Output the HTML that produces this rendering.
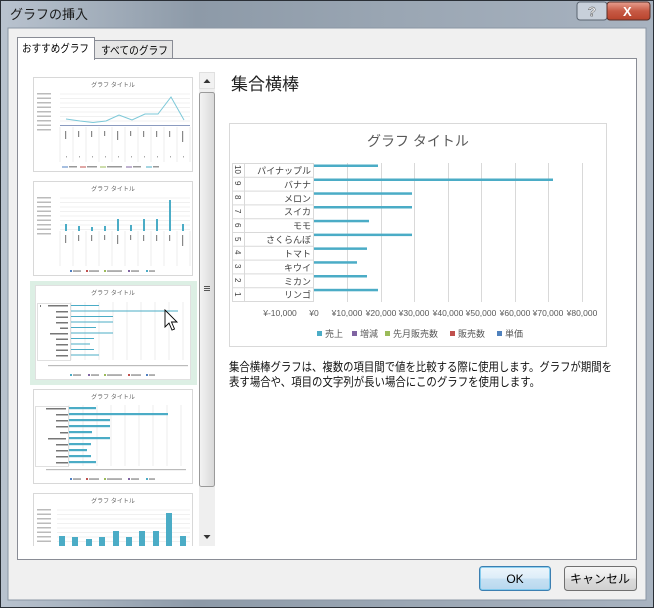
<!DOCTYPE html>
<html><head><meta charset="utf-8"><style>
body{margin:0;width:654px;height:608px;overflow:hidden;background:#6b7a8a}
svg{display:block}
text{font-family:"Liberation Sans","Noto Sans CJK JP",sans-serif}
</style></head><body>
<svg width="654" height="608" viewBox="0 0 654 608" xmlns="http://www.w3.org/2000/svg">
<defs>
<linearGradient id="tb" x1="0" x2="1"><stop offset="0" stop-color="#b9c3cf"/><stop offset=".3" stop-color="#8d9aa8"/><stop offset=".6" stop-color="#9aa6b3"/><stop offset="1" stop-color="#a8b3c0"/></linearGradient>
<linearGradient id="btn" x1="0" y1="0" x2="0" y2="1"><stop offset="0" stop-color="#f6f6f6"/><stop offset=".5" stop-color="#e8e8e8"/><stop offset=".5" stop-color="#dcdcdc"/><stop offset="1" stop-color="#d0d0d0"/></linearGradient>
<linearGradient id="ok" x1="0" y1="0" x2="0" y2="1"><stop offset="0" stop-color="#eef7fc"/><stop offset=".5" stop-color="#dcecf8"/><stop offset=".5" stop-color="#c7e1f3"/><stop offset="1" stop-color="#b7d7ee"/></linearGradient>
<linearGradient id="cl" x1="0" y1="0" x2="0" y2="1"><stop offset="0" stop-color="#e8a090"/><stop offset=".5" stop-color="#c75a45"/><stop offset="1" stop-color="#b8432c"/></linearGradient>
<linearGradient id="sb" x1="0" x2="1"><stop offset="0" stop-color="#f4f4f4"/><stop offset="1" stop-color="#d8d8d8"/></linearGradient>
</defs>
<rect x="0" y="0" width="654" height="608" fill="url(#tb)"/>
<rect x="0.5" y="0.5" width="653" height="607" fill="none" stroke="#2a2f36"/>
<text x="10" y="19" font-size="13" fill="#1a1a1a">グラフの挿入</text>
<rect x="577" y="2" width="30" height="18" rx="3" fill="#c8d0da" stroke="#5a6470"/>
<text x="588" y="16" font-size="13" font-weight="bold" fill="#fff" stroke="#333" stroke-width=".4" font-family="Liberation Sans">?</text>
<rect x="607" y="2" width="43" height="18" rx="3" fill="url(#cl)" stroke="#5a3028"/>
<text x="623" y="16" font-size="13" font-weight="bold" fill="#fff" font-family="Liberation Sans">X</text>
<rect x="8" y="28" width="638" height="572" fill="#f0f0f0" stroke="#8a96a4"/>
<rect x="17.5" y="58.5" width="619" height="501" fill="#fff" stroke="#898c95"/>
<rect x="94.5" y="40.5" width="78" height="18" fill="#e6e6e6" stroke="#898c95"/>
<text x="101" y="54" font-size="11" fill="#000" textLength="67" lengthAdjust="spacingAndGlyphs">すべてのグラフ</text>
<rect x="17.5" y="37.5" width="77" height="22" fill="#fff" stroke="#898c95"/>
<rect x="18" y="58" width="76" height="3" fill="#fff"/>
<text x="22" y="52" font-size="11" fill="#000" textLength="67" lengthAdjust="spacingAndGlyphs">おすすめグラフ</text>

<g font-size="5" fill="#666">
<rect x="33.5" y="77.5" width="159" height="94" fill="#fff" stroke="#d8d8d8"/>
<text x="113" y="87" font-size="6" text-anchor="middle">グラフ タイトル</text>
<g stroke="#e2e2e2" stroke-width=".6">
<line x1="60" y1="94" x2="190" y2="94"/><line x1="60" y1="98.5" x2="190" y2="98.5"/><line x1="60" y1="103" x2="190" y2="103"/><line x1="60" y1="107.5" x2="190" y2="107.5"/><line x1="60" y1="112" x2="190" y2="112"/><line x1="60" y1="116.5" x2="190" y2="116.5"/><line x1="60" y1="121" x2="190" y2="121"/><line x1="60" y1="125.5" x2="190" y2="125.5"/>
<line x1="60" y1="127" x2="60" y2="162"/><line x1="73" y1="127" x2="73" y2="162"/><line x1="86" y1="127" x2="86" y2="162"/><line x1="99" y1="127" x2="99" y2="162"/><line x1="112" y1="127" x2="112" y2="162"/><line x1="125" y1="127" x2="125" y2="162"/><line x1="138" y1="127" x2="138" y2="162"/><line x1="151" y1="127" x2="151" y2="162"/><line x1="164" y1="127" x2="164" y2="162"/><line x1="177" y1="127" x2="177" y2="162"/><line x1="190" y1="127" x2="190" y2="162"/>
</g>
<g fill="#bbb"><rect x="37" y="93" width="14" height="1.5"/><rect x="37" y="97.5" width="14" height="1.5"/><rect x="37" y="102" width="14" height="1.5"/><rect x="37" y="106.5" width="14" height="1.5"/><rect x="37" y="111" width="14" height="1.5"/><rect x="37" y="115.5" width="14" height="1.5"/><rect x="37" y="120" width="14" height="1.5"/><rect x="37" y="124.5" width="14" height="1.5"/><rect x="37" y="129" width="14" height="1.5"/></g>
<polyline points="66,119 80,121 93,122.5 106,121 119,115 132,120 145,114 158,114 171,97 184,120" fill="none" stroke="#7cc8d8" stroke-width="1"/>
<line x1="60" y1="125.5" x2="190" y2="125.5" stroke="#6a7fb0" stroke-width=".8"/>
<g fill="#888"><rect x="65" y="131" width="1.2" height="8"/><rect x="78" y="131" width="1.2" height="6"/><rect x="91" y="131" width="1.2" height="6"/><rect x="104" y="131" width="1.2" height="5"/><rect x="117" y="131" width="1.2" height="9"/><rect x="130" y="131" width="1.2" height="5"/><rect x="143" y="131" width="1.2" height="6"/><rect x="156" y="131" width="1.2" height="6"/><rect x="169" y="131" width="1.2" height="6"/><rect x="182" y="131" width="1.2" height="11"/></g>
<g fill="#aaa"><rect x="66" y="156" width="1" height="1.5"/><rect x="79" y="156" width="1" height="1.5"/><rect x="92" y="156" width="1" height="1.5"/><rect x="105" y="156" width="1" height="1.5"/><rect x="118" y="156" width="1" height="1.5"/><rect x="131" y="156" width="1" height="1.5"/><rect x="144" y="156" width="1" height="1.5"/><rect x="157" y="156" width="1" height="1.5"/><rect x="170" y="156" width="1" height="1.5"/><rect x="183" y="156" width="1" height="1.5"/></g>
<g stroke-width="1"><line x1="62" y1="167" x2="68" y2="167" stroke="#4f7fc0"/><line x1="80" y1="167" x2="86" y2="167" stroke="#c0504d"/><line x1="100" y1="167" x2="106" y2="167" stroke="#9bbb59"/><line x1="126" y1="167" x2="132" y2="167" stroke="#8064a2"/><line x1="146" y1="167" x2="152" y2="167" stroke="#4bacc6"/></g>
<g fill="#999"><rect x="69" y="166" width="8" height="1.5"/><rect x="87" y="166" width="10" height="1.5"/><rect x="107" y="166" width="15" height="1.5"/><rect x="133" y="166" width="8" height="1.5"/><rect x="153" y="166" width="6" height="1.5"/></g>
<rect x="33.5" y="181.5" width="159" height="94" fill="#fff" stroke="#d8d8d8"/>
<text x="113" y="191" font-size="6" text-anchor="middle">グラフ タイトル</text>
<g stroke="#e2e2e2" stroke-width=".6">
<line x1="60" y1="198" x2="190" y2="198"/><line x1="60" y1="202.5" x2="190" y2="202.5"/><line x1="60" y1="207" x2="190" y2="207"/><line x1="60" y1="211.5" x2="190" y2="211.5"/><line x1="60" y1="216" x2="190" y2="216"/><line x1="60" y1="220.5" x2="190" y2="220.5"/><line x1="60" y1="225" x2="190" y2="225"/><line x1="60" y1="229.5" x2="190" y2="229.5"/>
<line x1="60" y1="231" x2="60" y2="266"/><line x1="73" y1="231" x2="73" y2="266"/><line x1="86" y1="231" x2="86" y2="266"/><line x1="99" y1="231" x2="99" y2="266"/><line x1="112" y1="231" x2="112" y2="266"/><line x1="125" y1="231" x2="125" y2="266"/><line x1="138" y1="231" x2="138" y2="266"/><line x1="151" y1="231" x2="151" y2="266"/><line x1="164" y1="231" x2="164" y2="266"/><line x1="177" y1="231" x2="177" y2="266"/><line x1="190" y1="231" x2="190" y2="266"/>
</g>
<g fill="#bbb"><rect x="37" y="197" width="14" height="1.5"/><rect x="37" y="201.5" width="14" height="1.5"/><rect x="37" y="206" width="14" height="1.5"/><rect x="37" y="210.5" width="14" height="1.5"/><rect x="37" y="215" width="14" height="1.5"/><rect x="37" y="219.5" width="14" height="1.5"/><rect x="37" y="224" width="14" height="1.5"/><rect x="37" y="228.5" width="14" height="1.5"/><rect x="37" y="233" width="14" height="1.5"/></g>
<g fill="#4bacc6"><rect x="65" y="224" width="2" height="7"/><rect x="78" y="226" width="2" height="5"/><rect x="91" y="227" width="2" height="4"/><rect x="104" y="226" width="2" height="5"/><rect x="117" y="219" width="2" height="12"/><rect x="130" y="225" width="2" height="6"/><rect x="143" y="219" width="2" height="12"/><rect x="156" y="219" width="2" height="12"/><rect x="169" y="200" width="2" height="31"/><rect x="182" y="224" width="2" height="7"/></g>
<g fill="#888"><rect x="65" y="235" width="1.2" height="8"/><rect x="78" y="235" width="1.2" height="6"/><rect x="91" y="235" width="1.2" height="6"/><rect x="104" y="235" width="1.2" height="5"/><rect x="117" y="235" width="1.2" height="9"/><rect x="130" y="235" width="1.2" height="5"/><rect x="143" y="235" width="1.2" height="6"/><rect x="156" y="235" width="1.2" height="6"/><rect x="169" y="235" width="1.2" height="6"/><rect x="182" y="235" width="1.2" height="11"/></g>
<g><rect x="70" y="270" width="2" height="2" fill="#4f7fc0"/><rect x="86" y="270" width="2" height="2" fill="#c0504d"/><rect x="104" y="270" width="2" height="2" fill="#9bbb59"/><rect x="128" y="270" width="2" height="2" fill="#8064a2"/><rect x="146" y="270" width="2" height="2" fill="#4bacc6"/></g>
<g fill="#999"><rect x="73" y="270.3" width="8" height="1.5"/><rect x="89" y="270.3" width="10" height="1.5"/><rect x="107" y="270.3" width="15" height="1.5"/><rect x="131" y="270.3" width="8" height="1.5"/><rect x="149" y="270.3" width="6" height="1.5"/></g>
<rect x="30" y="281" width="167" height="104" fill="#dcefe4"/>
<rect x="35.5" y="285.5" width="155" height="94" fill="#fff" stroke="#e0e0e0"/>
<text x="113" y="295" font-size="6" text-anchor="middle">グラフ タイトル</text>
<g stroke="#e2e2e2" stroke-width=".6"><line x1="71" y1="302" x2="71" y2="360"/><line x1="85" y1="302" x2="85" y2="360"/><line x1="99" y1="302" x2="99" y2="360"/><line x1="113" y1="302" x2="113" y2="360"/><line x1="127" y1="302" x2="127" y2="360"/><line x1="141" y1="302" x2="141" y2="360"/><line x1="155" y1="302" x2="155" y2="360"/><line x1="169" y1="302" x2="169" y2="360"/><line x1="183" y1="302" x2="183" y2="360"/></g>
<rect x="37.5" y="303.5" width="33" height="57" fill="none" stroke="#ccc" stroke-width=".6"/>
<g fill="#777"><rect x="40" y="305" width="1" height="2"/><rect x="48" y="305" width="20" height="1.5"/><rect x="56" y="311" width="12" height="1.5"/><rect x="56" y="316.5" width="12" height="1.5"/><rect x="56" y="322" width="12" height="1.5"/><rect x="60" y="327.5" width="8" height="1.5"/><rect x="50" y="333" width="18" height="1.5"/><rect x="56" y="338.5" width="12" height="1.5"/><rect x="56" y="344" width="12" height="1.5"/><rect x="56" y="349.5" width="12" height="1.5"/><rect x="56" y="355" width="12" height="1.5"/></g>
<g fill="#4bacc6"><rect x="71" y="305" width="28" height="1"/><rect x="71" y="310.5" width="107" height="1"/><rect x="71" y="316" width="42" height="1"/><rect x="71" y="321.5" width="42" height="1"/><rect x="71" y="327" width="25" height="1"/><rect x="71" y="332.5" width="42" height="1"/><rect x="71" y="338" width="23" height="1"/><rect x="71" y="343.5" width="19" height="1"/><rect x="71" y="349" width="23" height="1"/><rect x="71" y="354.5" width="28" height="1"/></g>
<rect x="48" y="365" width="140" height="1.2" fill="#bbb"/>
<g><rect x="70" y="374" width="2" height="2" fill="#4bacc6"/><rect x="88" y="374" width="2" height="2" fill="#8064a2"/><rect x="104" y="374" width="2" height="2" fill="#9bbb59"/><rect x="128" y="374" width="2" height="2" fill="#c0504d"/><rect x="146" y="374" width="2" height="2" fill="#4f7fc0"/></g>
<g fill="#999"><rect x="73" y="374.3" width="8" height="1.5"/><rect x="91" y="374.3" width="8" height="1.5"/><rect x="107" y="374.3" width="15" height="1.5"/><rect x="131" y="374.3" width="10" height="1.5"/><rect x="149" y="374.3" width="6" height="1.5"/></g>
<path d="M165,310 L165,327 L169,323 L172,330 L174.5,329 L171.5,322 L177,322 Z" fill="#fff" stroke="#000" stroke-width=".9"/>
<rect x="33.5" y="389.5" width="159" height="94" fill="#fff" stroke="#d8d8d8"/>
<text x="113" y="399" font-size="6" text-anchor="middle">グラフ タイトル</text>
<g stroke="#e2e2e2" stroke-width=".6"><line x1="69" y1="405" x2="69" y2="466"/><line x1="83" y1="405" x2="83" y2="466"/><line x1="97" y1="405" x2="97" y2="466"/><line x1="111" y1="405" x2="111" y2="466"/><line x1="125" y1="405" x2="125" y2="466"/><line x1="139" y1="405" x2="139" y2="466"/><line x1="153" y1="405" x2="153" y2="466"/><line x1="167" y1="405" x2="167" y2="466"/><line x1="181" y1="405" x2="181" y2="466"/></g>
<rect x="35.5" y="406.5" width="33" height="60" fill="none" stroke="#ccc" stroke-width=".6"/>
<g fill="#777"><rect x="46" y="408" width="20" height="1.5"/><rect x="56" y="414" width="12" height="1.5"/><rect x="56" y="420" width="12" height="1.5"/><rect x="56" y="426" width="12" height="1.5"/><rect x="60" y="432" width="8" height="1.5"/><rect x="48" y="438" width="18" height="1.5"/><rect x="56" y="444" width="12" height="1.5"/><rect x="56" y="450" width="12" height="1.5"/><rect x="56" y="456" width="12" height="1.5"/><rect x="56" y="462" width="12" height="1.5"/></g>
<g fill="#4bacc6"><rect x="69" y="407" width="27" height="2.2"/><rect x="69" y="413" width="99" height="2.2"/><rect x="69" y="419" width="41" height="2.2"/><rect x="69" y="425" width="41" height="2.2"/><rect x="69" y="431" width="23" height="2.2"/><rect x="69" y="437" width="41" height="2.2"/><rect x="69" y="443" width="22" height="2.2"/><rect x="69" y="449" width="18" height="2.2"/><rect x="69" y="455" width="22" height="2.2"/><rect x="69" y="461" width="27" height="2.2"/></g>
<rect x="46" y="469" width="140" height="1.2" fill="#bbb"/>
<g><rect x="70" y="478" width="2" height="2" fill="#4f7fc0"/><rect x="86" y="478" width="2" height="2" fill="#c0504d"/><rect x="104" y="478" width="2" height="2" fill="#9bbb59"/><rect x="128" y="478" width="2" height="2" fill="#8064a2"/><rect x="146" y="478" width="2" height="2" fill="#4bacc6"/></g>
<g fill="#999"><rect x="73" y="478.3" width="8" height="1.5"/><rect x="89" y="478.3" width="10" height="1.5"/><rect x="107" y="478.3" width="15" height="1.5"/><rect x="131" y="478.3" width="8" height="1.5"/><rect x="149" y="478.3" width="6" height="1.5"/></g>
<rect x="33.5" y="493.5" width="159" height="60" fill="#fff" stroke="#d8d8d8"/>
<text x="113" y="503" font-size="6" text-anchor="middle">グラフ タイトル</text>
<g stroke="#e2e2e2" stroke-width=".6"><line x1="57" y1="510" x2="190" y2="510"/><line x1="57" y1="514.5" x2="190" y2="514.5"/><line x1="57" y1="519" x2="190" y2="519"/><line x1="57" y1="523.5" x2="190" y2="523.5"/><line x1="57" y1="528" x2="190" y2="528"/><line x1="57" y1="532.5" x2="190" y2="532.5"/><line x1="57" y1="537" x2="190" y2="537"/><line x1="57" y1="541.5" x2="190" y2="541.5"/></g>
<g fill="#bbb"><rect x="37" y="509" width="14" height="1.5"/><rect x="37" y="513.5" width="14" height="1.5"/><rect x="37" y="518" width="14" height="1.5"/><rect x="37" y="522.5" width="14" height="1.5"/><rect x="37" y="527" width="14" height="1.5"/><rect x="37" y="531.5" width="14" height="1.5"/><rect x="37" y="536" width="14" height="1.5"/><rect x="37" y="540.5" width="14" height="1.5"/></g>
<g fill="#4bacc6"><rect x="59" y="536" width="6" height="10"/><rect x="72" y="537" width="6" height="9"/><rect x="86" y="539" width="6" height="7"/><rect x="99" y="537" width="6" height="9"/><rect x="113" y="531" width="6" height="15"/><rect x="126" y="537" width="6" height="9"/><rect x="139" y="531" width="6" height="15"/><rect x="153" y="531" width="6" height="15"/><rect x="166" y="513" width="6" height="33"/><rect x="180" y="536" width="6" height="10"/></g>
</g>
<rect x="18" y="546" width="198" height="13" fill="#fff"/>

<rect x="199" y="72" width="16" height="474" fill="#efefef"/>
<rect x="199.5" y="72.5" width="15" height="16" fill="#f2f2f2" stroke="#e0e0e0"/>
<path d="M203.5,83 L207,79 L210.5,83 Z" fill="#333"/>
<rect x="199.5" y="92.5" width="15" height="394" rx="2" fill="url(#sb)" stroke="#9a9a9a"/>
<g stroke="#555" stroke-width="1"><line x1="204" y1="286.5" x2="210" y2="286.5"/><line x1="204" y1="288.5" x2="210" y2="288.5"/><line x1="204" y1="290.5" x2="210" y2="290.5"/></g>
<path d="M203.5,535 L210.5,535 L207,539 Z" fill="#333"/>

<text x="231" y="90" font-size="17" fill="#222">集合横棒</text>
<rect x="229.5" y="123.5" width="377" height="223" fill="#fff" stroke="#d9d9d9"/>
<text x="418" y="146" font-size="14" fill="#595959" text-anchor="middle">グラフ タイトル</text>
<g stroke="#d9d9d9" stroke-width="1">
<line x1="347.5" y1="163" x2="347.5" y2="302"/><line x1="381.5" y1="163" x2="381.5" y2="302"/><line x1="414.5" y1="163" x2="414.5" y2="302"/><line x1="448.5" y1="163" x2="448.5" y2="302"/><line x1="481.5" y1="163" x2="481.5" y2="302"/><line x1="515.5" y1="163" x2="515.5" y2="302"/><line x1="548.5" y1="163" x2="548.5" y2="302"/><line x1="582.5" y1="163" x2="582.5" y2="302"/>
</g>
<g stroke="#d9d9d9" fill="none">
<rect x="232.5" y="163.5" width="81" height="138"/>
<line x1="244.5" y1="163" x2="244.5" y2="302"/>
<line x1="232" y1="177.3" x2="314" y2="177.3"/><line x1="232" y1="191.1" x2="314" y2="191.1"/><line x1="232" y1="204.9" x2="314" y2="204.9"/><line x1="232" y1="218.7" x2="314" y2="218.7"/><line x1="232" y1="232.5" x2="314" y2="232.5"/><line x1="232" y1="246.3" x2="314" y2="246.3"/><line x1="232" y1="260.1" x2="314" y2="260.1"/><line x1="232" y1="273.9" x2="314" y2="273.9"/><line x1="232" y1="287.7" x2="314" y2="287.7"/>
</g>
<g font-size="9" fill="#404040" text-anchor="end">
<text x="311" y="174">パイナップル</text><text x="311" y="188">バナナ</text><text x="311" y="202">メロン</text><text x="311" y="215">スイカ</text><text x="311" y="229">モモ</text><text x="311" y="243">さくらんぼ</text><text x="311" y="257">トマト</text><text x="311" y="271">キウイ</text><text x="311" y="285">ミカン</text><text x="311" y="298">リンゴ</text>
</g>
<g font-size="8" fill="#404040">
<text transform="translate(235,165) rotate(90)">10</text><text transform="translate(235,181) rotate(90)">9</text><text transform="translate(235,195) rotate(90)">8</text><text transform="translate(235,209) rotate(90)">7</text><text transform="translate(235,223) rotate(90)">6</text><text transform="translate(235,237) rotate(90)">5</text><text transform="translate(235,250) rotate(90)">4</text><text transform="translate(235,264) rotate(90)">3</text><text transform="translate(235,278) rotate(90)">2</text><text transform="translate(235,292) rotate(90)">1</text>
</g>
<g fill="#4bacc6">
<rect x="314" y="164.5" width="64" height="2.5"/><rect x="314" y="178.5" width="239" height="2.5"/><rect x="314" y="192.3" width="98" height="2.5"/><rect x="314" y="206" width="98" height="2.5"/><rect x="314" y="219.8" width="55" height="2.5"/><rect x="314" y="233.6" width="98" height="2.5"/><rect x="314" y="247.4" width="53" height="2.5"/><rect x="314" y="261.2" width="43" height="2.5"/><rect x="314" y="275" width="53" height="2.5"/><rect x="314" y="288.8" width="64" height="2.5"/>
</g>
<g font-size="8.5" fill="#595959" text-anchor="middle">
<text x="280" y="316">¥-10,000</text><text x="314" y="316">¥0</text><text x="347" y="316">¥10,000</text><text x="381" y="316">¥20,000</text><text x="414" y="316">¥30,000</text><text x="448" y="316">¥40,000</text><text x="481" y="316">¥50,000</text><text x="515" y="316">¥60,000</text><text x="548" y="316">¥70,000</text><text x="582" y="316">¥80,000</text>
</g>
<g font-size="9" fill="#595959">
<rect x="317" y="331" width="5" height="5" fill="#4bacc6"/><text x="325" y="337">売上</text>
<rect x="352" y="331" width="5" height="5" fill="#8064a2"/><text x="360" y="337">増減</text>
<rect x="385" y="331" width="5" height="5" fill="#9bbb59"/><text x="393" y="337">先月販売数</text>
<rect x="450" y="331" width="5" height="5" fill="#c0504d"/><text x="458" y="337">販売数</text>
<rect x="497" y="331" width="5" height="5" fill="#4f81bd"/><text x="505" y="337">単価</text>
</g>
<g font-size="12" fill="#111">
<text x="229" y="371" textLength="383" lengthAdjust="spacingAndGlyphs">集合横棒グラフは、複数の項目間で値を比較する際に使用します。グラフが期間を</text>
<text x="229" y="386" textLength="311" lengthAdjust="spacingAndGlyphs">表す場合や、項目の文字列が長い場合にこのグラフを使用します。</text>
</g>

<rect x="479.5" y="566.5" width="71" height="24" rx="3" fill="url(#ok)" stroke="#3c7fb1"/>
<rect x="480.5" y="567.5" width="69" height="22" rx="2" fill="none" stroke="#6fc4ec" stroke-width=".8"/>
<text x="515" y="583" font-size="12" text-anchor="middle" fill="#000">OK</text>
<rect x="564.5" y="566.5" width="72" height="24" rx="3" fill="url(#btn)" stroke="#707070"/>
<text x="600" y="583" font-size="12" text-anchor="middle" fill="#000">キャンセル</text>
</svg>
</body></html>
